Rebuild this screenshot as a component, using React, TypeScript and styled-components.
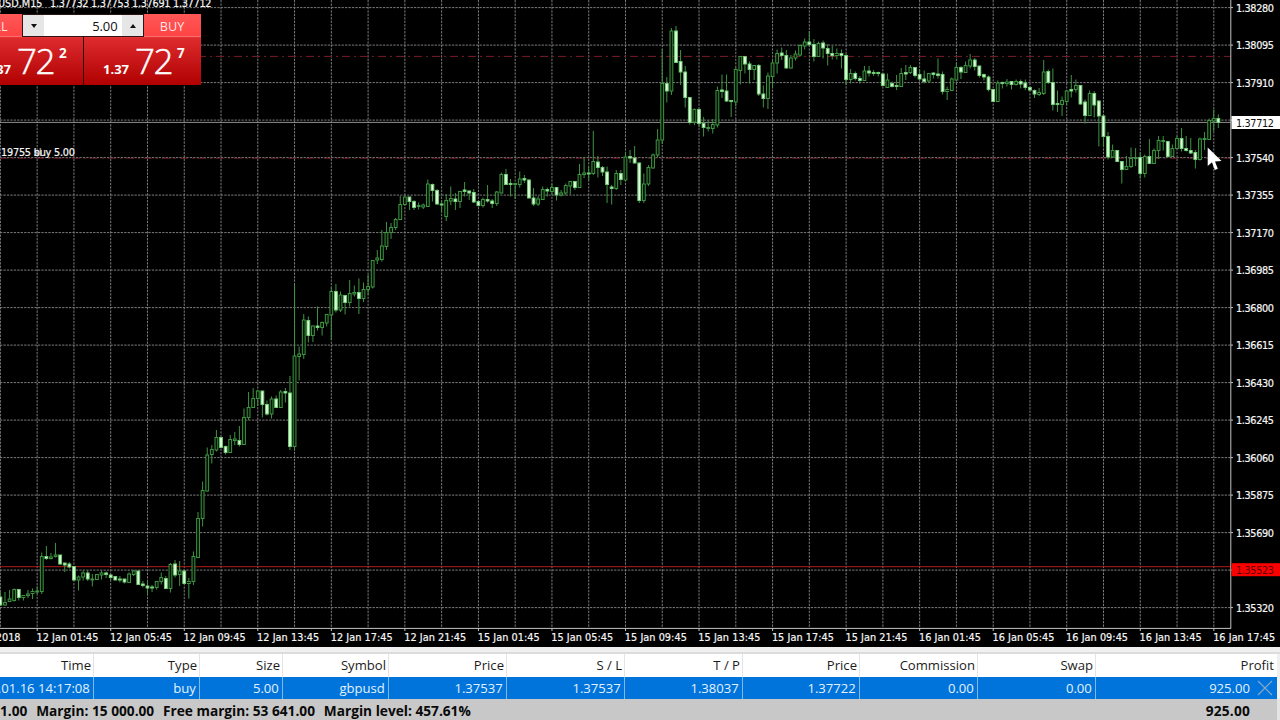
import React from "react";
import styled, { createGlobalStyle } from "styled-components";

// [high, bodyTop, bodyBottom, low, filled]
type Candle = [number, number, number, number, number];

interface Column {
  title: string;
  value: string;
  width: number;
}

const CANDLE_START = 0.4;
const CANDLE_STEP = 4.596;
const GRID_X = 36.77;
const GRID_Y = 37.5;
const CHART_WIDTH = 1231;
const CHART_HEIGHT = 628;

const candles: Candle[] = [
  [592, 597, 605, 606, 1], [592, 602.5, 605, 605.5, 0], [590, 599, 601.5, 602, 0], [588.5, 589.5, 600.5, 601.5, 0],
  [589, 589.5, 597.5, 600.5, 1], [595, 595.5, 597.5, 600.5, 0], [590, 594, 595.5, 598, 0], [588.5, 591.5, 593.5, 599, 0],
  [586.5, 591, 592, 594, 0], [552.5, 556.5, 591.5, 594, 0], [546, 556.5, 558.5, 560, 1], [553, 557, 558.5, 559.5, 0],
  [543, 555, 556.5, 557.5, 0], [555, 555, 564, 565, 1], [563, 563, 565, 572, 1], [562, 564, 567, 568.5, 1],
  [566.5, 566.5, 580, 580.5, 1], [575.5, 577, 580, 590.5, 0], [570.5, 573, 577, 580.5, 0], [570.5, 573, 579, 581, 1],
  [574, 579, 580, 586.5, 0], [574, 574.5, 579.5, 580, 0], [570.5, 573, 575, 579.5, 0], [571.5, 573, 574.5, 578, 1],
  [575, 575, 577.5, 580, 1], [576, 576.5, 580, 580, 1], [576, 579, 580, 582.5, 1], [579, 579, 582, 583.5, 1],
  [572.5, 574, 582.5, 583, 0], [570, 571, 574.5, 576, 0], [571, 571, 584.5, 585, 1], [581, 584, 585.5, 587.5, 1],
  [580.5, 586, 588, 594.5, 1], [585, 587, 588, 592, 1], [581, 581.5, 587.5, 589.5, 0], [572.5, 577.5, 581.5, 584.5, 0],
  [576, 578.5, 588.5, 589, 1], [563, 564.5, 588.5, 592.5, 0], [560, 564, 575, 577.5, 1], [561, 571, 574.5, 586, 0],
  [571, 571, 583.5, 584.5, 1], [578, 581.5, 583.5, 598.5, 0], [551.5, 556.5, 581.5, 585, 0], [512, 518.5, 557.5, 558, 0],
  [481.5, 490.5, 518.5, 526.5, 0], [447.5, 455, 491, 491.5, 0], [445, 449.5, 454.5, 463.5, 0], [430, 437.5, 450, 451.5, 0],
  [437, 437.5, 447.5, 448, 1], [445.5, 446.5, 452.5, 454.5, 1], [435, 439.5, 452.5, 453, 0], [432, 439, 440.5, 445, 0],
  [426, 440.5, 444.5, 446.5, 1], [408.5, 417.5, 444.5, 445, 0], [392, 407.5, 417.5, 420, 0], [388, 398.5, 407.5, 408, 0],
  [390, 391, 398.5, 406, 0], [391, 391, 404.5, 417.5, 1], [400.5, 404.5, 414, 415.5, 1], [396.5, 399, 414, 418.5, 0],
  [395.5, 399, 407.5, 408, 1], [390, 392, 407.5, 408, 0], [388, 391.5, 393, 402.5, 1], [376, 393, 446.5, 450, 1],
  [284, 356, 446.5, 450.5, 0], [346.5, 354, 356.5, 380.5, 0], [314, 320, 354.5, 359, 0], [316.5, 320.5, 335.5, 342.5, 1],
  [325.5, 326, 335.5, 342, 0], [306.5, 326, 327.5, 330.5, 1], [321.5, 322.5, 327.5, 335.5, 0], [314, 314.5, 323, 326.5, 0],
  [287.5, 291.5, 315, 340, 0], [284, 291.5, 310, 312.5, 1], [291.5, 295, 310, 312, 0], [295, 295.5, 302.5, 314.5, 1],
  [280, 293.5, 302.5, 306.5, 0], [285.5, 292.5, 294, 296.5, 0], [278.5, 292.5, 298.5, 314, 1], [282.5, 289.5, 298.5, 302, 0],
  [275, 286.5, 289.5, 295, 0], [260, 260.5, 287, 288.5, 0], [250, 258, 260, 264, 0], [230, 246, 259.5, 261.5, 0],
  [222, 232.5, 246.5, 250, 0], [223, 227.5, 232.5, 239, 0], [218, 219.5, 227.5, 230, 0], [196, 204.5, 219.5, 220, 0],
  [195.5, 197, 204.5, 205.5, 0], [197, 197, 201.5, 210, 1], [200, 201.5, 207.5, 210, 1], [202.5, 205.5, 206.5, 209.5, 0],
  [203.5, 205, 207, 209, 0], [179.5, 184, 206.5, 206.5, 0], [183.5, 184.5, 190.5, 201.5, 1], [189, 190.5, 204, 205, 1],
  [200.5, 204, 205, 212.5, 1], [194, 200.5, 216.5, 221, 0], [186.5, 198.5, 201, 205, 0], [193, 199, 201.5, 210, 1],
  [191, 191.5, 201.5, 208, 0], [182, 190, 191.5, 196.5, 1], [190.5, 191, 193, 200, 1], [189, 192.5, 202, 203, 1],
  [200.5, 201.5, 205.5, 206.5, 1], [197.5, 199.5, 205.5, 207.5, 0], [185, 199.5, 201, 202.5, 1], [199, 201, 203.5, 208, 1],
  [191, 192, 203.5, 206, 0], [172.5, 174.5, 193, 193.5, 0], [169, 174.5, 184.5, 185, 1], [179, 183.5, 184.5, 196.5, 1],
  [183, 183.5, 184.5, 199, 0], [171.5, 179, 184.5, 187.5, 0], [175, 178.5, 180, 183, 1], [179.5, 180, 198, 198.5, 1],
  [188, 198, 204, 206, 1], [196, 199, 204, 206, 0], [186.5, 189.5, 199.5, 200, 0], [187.5, 189.5, 191, 196.5, 1],
  [184, 187.5, 191.5, 194, 0], [187, 187.5, 195, 200.5, 1], [190, 193, 195, 196.5, 0], [183.5, 185.5, 193, 195.5, 0],
  [181, 181.5, 186, 194.5, 0], [181, 181.5, 187.5, 190, 1], [164, 174.5, 187.5, 188, 0], [157, 173, 174.5, 178, 0],
  [167, 173, 174, 180, 1], [131, 161.5, 173.5, 175, 0], [156, 162, 167.5, 177.5, 1], [166, 167.5, 172, 176, 1],
  [166.5, 172, 184.5, 203, 1], [185, 187, 188.5, 204.5, 1], [170, 173.5, 188.5, 190, 0], [170, 173.5, 179.5, 185, 1],
  [152, 157, 180, 181, 0], [150, 156.5, 158, 163, 1], [146, 158, 163, 163.5, 1], [162.5, 163, 200.5, 203, 1],
  [173.5, 184, 200.5, 203, 0], [165, 167.5, 184, 186, 0], [153.5, 155, 168, 168.5, 0], [129, 140, 155, 157, 0],
  [49, 83.5, 140, 144, 0], [77, 83.5, 91, 102.5, 1], [28, 31, 91, 95, 0], [26, 31, 62.5, 63, 1],
  [50, 61.5, 72, 85, 1], [66, 72, 97.5, 107.5, 1], [97, 97.5, 122.5, 124.5, 1], [108.5, 109.5, 122, 125, 0],
  [108.5, 109.5, 123.5, 127, 1], [117, 123.5, 127.5, 136.5, 1], [120, 127.5, 128.5, 131.5, 0], [119, 124.5, 128.5, 133.5, 0],
  [86.5, 90.5, 125, 127.5, 0], [74.5, 90, 91.5, 98, 1], [74.5, 91, 101, 102, 1], [100, 100.5, 101.5, 117, 1],
  [67.5, 69.5, 102, 106.5, 0], [56, 56.5, 70.5, 84.5, 0], [56, 56.5, 64, 73.5, 1], [61.5, 64, 69.5, 83.5, 1],
  [65, 65.5, 69.5, 80, 0], [64, 65.5, 94, 96, 1], [85.5, 94, 98.5, 107.5, 1], [72.5, 76, 98.5, 109, 0],
  [60, 63, 76.5, 87.5, 0], [49.5, 53.5, 63, 73.5, 0], [47.5, 53, 55.5, 60, 1], [50, 55.5, 68, 68.5, 1],
  [55, 58, 68, 68.5, 0], [50.5, 54, 58, 60.5, 0], [44.5, 45.5, 55, 56.5, 0], [38.5, 42, 46, 49.5, 0],
  [31, 42, 44.5, 46.5, 1], [39, 44.5, 56.5, 61.5, 1], [41.5, 43.5, 56.5, 57, 0], [40.5, 43, 48, 58.5, 1],
  [44, 48.5, 53.5, 65.5, 1], [46, 53.5, 55.5, 59.5, 1], [48.5, 53.5, 55.5, 59.5, 0], [49.5, 53.5, 55.5, 68.5, 1],
  [54, 55.5, 79.5, 85, 1], [69, 73.5, 79.5, 83.5, 0], [71.5, 73.5, 78.5, 80.5, 1], [76, 78.5, 80.5, 83.5, 1],
  [66, 71, 80.5, 81, 0], [66, 71, 73, 76.5, 1], [70, 72.5, 73.5, 76, 1], [71.5, 72.5, 73.5, 76.5, 1],
  [73.5, 74, 85.5, 86, 1], [73.5, 80, 87.5, 88, 0], [81.5, 83.5, 86.5, 87.5, 1], [75, 85.5, 86.5, 90, 1],
  [68, 73.5, 86.5, 87, 0], [65, 72.5, 74, 80, 1], [65, 67.5, 72.5, 74, 0], [67, 67.5, 75.5, 77.5, 1],
  [70, 74.5, 79, 80, 1], [70.5, 79, 81.5, 83.5, 1], [73, 73.5, 81, 82.5, 0], [72.5, 73, 74.5, 78.5, 1],
  [58.5, 74, 75.5, 78.5, 1], [71.5, 74.5, 91.5, 94.5, 1], [86.5, 89.5, 91.5, 100, 0], [77.5, 79, 90.5, 91, 0],
  [63.5, 67.5, 80, 81, 0], [66, 67.5, 72, 79, 1], [61.5, 65.5, 72.5, 73, 0], [54, 60, 66, 68.5, 0],
  [58, 60, 66.5, 70.5, 1], [66, 66, 75.5, 77.5, 1], [73.5, 74.5, 77, 80.5, 1], [75.5, 77, 89.5, 91.5, 1],
  [89, 89.5, 101.5, 102, 1], [80.5, 83, 101.5, 102, 0], [81.5, 82.5, 83.5, 88.5, 1], [79, 82, 83.5, 86.5, 0],
  [81, 81.5, 84.5, 89.5, 1], [79.5, 81.5, 84.5, 85.5, 0], [79.5, 81.5, 84, 88.5, 1], [79.5, 83, 87.5, 90, 1],
  [86, 87.5, 90, 91, 1], [89.5, 90.5, 94, 98, 1], [88, 92.5, 94.5, 96, 0], [60, 72, 93.5, 95, 0],
  [69.5, 71.5, 82.5, 84, 1], [68.5, 82.5, 104.5, 110.5, 1], [90.5, 103.5, 104.5, 112, 1], [96.5, 100.5, 104.5, 116, 0],
  [90, 91, 101.5, 105, 0], [75, 89.5, 91, 97.5, 1], [79.5, 85.5, 89.5, 92.5, 0], [85, 85.5, 104, 104.5, 1],
  [99.5, 102, 115.5, 123.5, 1], [90.5, 93.5, 115.5, 116, 0], [91, 93.5, 105, 117.5, 1], [100.5, 101, 116, 146.5, 1],
  [115.5, 116, 136.5, 147, 1], [132, 136.5, 157, 159.5, 1], [144.5, 150.5, 157, 158, 0], [150, 150.5, 161.5, 162, 1],
  [161, 161.5, 169.5, 183.5, 1], [156, 166.5, 169.5, 170, 0], [147.5, 158.5, 166.5, 168, 0], [148, 157.5, 158.5, 166, 0],
  [152.5, 157.5, 173.5, 178.5, 1], [154.5, 156.5, 173.5, 177.5, 0], [139, 156.5, 163.5, 164, 1], [148.5, 150.5, 163.5, 164, 0],
  [136, 140.5, 150.5, 159, 0], [136, 140.5, 141.5, 150.5, 0], [141, 141.5, 156.5, 157.5, 1], [144.5, 148.5, 156.5, 157, 0],
  [136, 138.5, 148.5, 149, 0], [128, 138.5, 148.5, 151.5, 1], [136, 148.5, 150.5, 151.5, 1], [138, 150.5, 153, 154, 1],
  [150, 152.5, 159.5, 168.5, 1], [137.5, 139, 159.5, 160.5, 0], [132, 138.5, 139.5, 150, 0], [118.5, 120.5, 139.5, 140, 0],
  [109.5, 118.5, 121, 131, 0], [114.5, 118.5, 122.5, 128, 1],
];

const priceLabels = [
  "1.38280", "1.38095", "1.37910", "", "1.37540", "1.37355", "1.37170", "1.36985", "1.36800",
  "1.36615", "1.36430", "1.36245", "1.36060", "1.35875", "1.35690", "", "1.35320",
];

const timeLabels = [
  "12 Jan 01:45", "12 Jan 05:45", "12 Jan 09:45", "12 Jan 13:45", "12 Jan 17:45", "12 Jan 21:45",
  "15 Jan 01:45", "15 Jan 05:45", "15 Jan 09:45", "15 Jan 13:45", "15 Jan 17:45", "15 Jan 21:45",
  "16 Jan 01:45", "16 Jan 05:45", "16 Jan 09:45", "16 Jan 13:45", "16 Jan 17:45",
];

const columns: Column[] = [
  { title: "Time", value: "2018.01.16 14:17:08", width: 94 },
  { title: "Type", value: "buy", width: 106 },
  { title: "Size", value: "5.00", width: 83 },
  { title: "Symbol", value: "gbpusd", width: 106 },
  { title: "Price", value: "1.37537", width: 118 },
  { title: "S / L", value: "1.37537", width: 118 },
  { title: "T / P", value: "1.38037", width: 118 },
  { title: "Price", value: "1.37722", width: 117 },
  { title: "Commission", value: "0.00", width: 118 },
  { title: "Swap", value: "0.00", width: 118 },
];

const GlobalStyle = createGlobalStyle`
  * {
    box-sizing: border-box;
  }
  body {
    margin: 0;
    overflow: hidden;
    background: #000;
  }
`;

const Terminal = styled.div`
  display: flex;
  flex-direction: column;
  width: 1280px;
  height: 720px;
  overflow: hidden;
  font-family: "Open Sans", "Noto Sans", sans-serif;
`;

const ChartPane = styled.div`
  position: relative;
  height: 647px;
  background: #000;
`;

const ChartSvg = styled.svg`
  display: block;
  font-family: "DejaVu Sans Condensed", "DejaVu Sans", sans-serif;
  font-stretch: condensed;
  font-size: 10.8px;
`;

const TradePanel = styled.div`
  position: absolute;
  top: 14px;
  left: -34px;
  width: 235px;
  height: 71px;
  display: grid;
  grid-template-columns: 117px 117px;
  column-gap: 1px;
  background: #2a0000;
`;

const Tile = styled.div`
  display: flex;
  flex-direction: column;
  background: linear-gradient(#ff5757 0, #f44 22px, #de2c2e 24px, #b00000 100%);
  color: #fff;
`;

const TileLabel = styled.div<{ $side: "left" | "right" }>`
  align-self: ${({ $side }) => ($side === "left" ? "flex-start" : "flex-end")};
  width: 57px;
  height: 23px;
  padding-right: 1px;
  border-bottom: 1px solid #f47070;
  color: #ffe4e4;
  font-size: 12.6px;
  line-height: 25px;
  text-align: center;
`;

const Quote = styled.div`
  display: flex;
  align-items: baseline;
  height: 48px;
  padding-left: 19px;
  line-height: 48px;
`;

const QuoteBase = styled.span`
  width: 32px;
  font-size: 13px;
  font-weight: 700;
`;

const QuoteBig = styled.span`
  width: 42px;
  font-size: 35px;
  font-weight: 300;
  letter-spacing: -1.5px;
  -webkit-text-stroke: 0.5px #fff;
`;

const QuotePip = styled.span`
  position: relative;
  top: -16px;
  font-size: 13.5px;
  font-weight: 700;
`;

const VolumeBox = styled.div`
  position: absolute;
  top: 0;
  left: 56px;
  width: 122px;
  height: 23px;
  display: flex;
  border: 1px solid #2c1414;
  background: #fff;
`;

const SpinButton = styled.div`
  width: 21px;
  display: flex;
  align-items: center;
  justify-content: center;
  background: #e6e6e6;
`;

const Volume = styled.div`
  flex: 1;
  padding-right: 4.5px;
  color: #111;
  font-size: 13px;
  line-height: 22px;
  text-align: right;
  letter-spacing: -0.1px;
`;

const Splitter = styled.div`
  height: 7px;
  background: #f0f0f0;
  border-bottom: 2px solid #dcdcdc;
`;

const TableRow = styled.div<{ $selected?: boolean }>`
  display: flex;
  height: ${({ $selected }) => ($selected ? 22 : 23)}px;
  background: ${({ $selected }) => ($selected ? "#0074da" : "#fff")};
  color: ${({ $selected }) => ($selected ? "#e3f1ff" : "#1c1c1c")};
  font-size: 13.1px;
  line-height: ${({ $selected }) => ($selected ? 22 : 23)}px;
  border-right: 3px solid #f0f0f0;
`;

const Cell = styled.div<{ $width: number; $selected?: boolean }>`
  display: flex;
  justify-content: flex-end;
  flex: 0 0 ${({ $width }) => $width}px;
  padding-right: ${({ $selected }) => ($selected ? 3.2 : 2)}px;
  border-right: 1px solid ${({ $selected }) => ($selected ? "#7fb9ec" : "#e4e4e4")};
  overflow: hidden;
  white-space: nowrap;
`;

const ProfitCell = styled.div<{ $selected?: boolean }>`
  flex: 1;
  display: flex;
  align-items: center;
  justify-content: flex-end;
  gap: 7px;
  padding-right: ${({ $selected }) => ($selected ? 4 : 3)}px;
`;

const StatusBar = styled.div`
  display: flex;
  gap: 8.8px;
  height: 21px;
  padding-right: 27px;
  border-right: 3px solid #e4e4e4;
  background: #c8c8c8;
  color: #0a0a0a;
  font-size: 13.7px;
  font-weight: 700;
  line-height: 24px;
  white-space: nowrap;
`;

const Total = styled.span`
  margin-left: auto;
  letter-spacing: 0.2px;
`;

const CandleShape = ({ candle, index }: { candle: Candle; index: number }) => {
  const [high, top, bottom, low, filled] = candle;
  const x = CANDLE_START + index * CANDLE_STEP;
  return (
    <g stroke="#3f9443" strokeWidth={1}>
      <line x1={x} x2={x} y1={high} y2={low} />
      <rect
        x={x - 1.4}
        y={top}
        width={2.8}
        height={Math.max(bottom - top, 0.8)}
        fill={filled ? "#dcffdc" : "#001400"}
        stroke={filled ? "#72cc75" : "#3f9443"}
      />
    </g>
  );
};

const Chart = () => (
  <ChartSvg width={1280} height={647}>
    <g stroke="#7c7c7c" strokeWidth={1} strokeDasharray="2.3 1.15">
      {priceLabels.map((_, i) => (
        <line key={i} x1={0} x2={CHART_WIDTH} y1={7.6 + i * GRID_Y} y2={7.6 + i * GRID_Y} />
      ))}
      {Array.from({ length: 34 }, (_, i) => (
        <line key={i} x1={0.4 + i * GRID_X} x2={0.4 + i * GRID_X} y1={0} y2={CHART_HEIGHT} />
      ))}
    </g>

    <g stroke="#7a1c26" strokeDasharray="8 4 2 4">
      <line x1={0} x2={CHART_WIDTH} y1={56.4} y2={56.4} />
      <line x1={0} x2={CHART_WIDTH} y1={158.3} y2={158.3} strokeOpacity={0.8} />
    </g>
    <line x1={0} x2={CHART_WIDTH} y1={566.7} y2={566.7} stroke="#b01c1c" />
    <line x1={0} x2={CHART_WIDTH} y1={122.4} y2={122.4} stroke="#909090" />

    {candles.map((candle, i) => (
      <CandleShape key={i} candle={candle} index={i} />
    ))}

    <g stroke="#c4c4c4">
      <line x1={1230.8} x2={1230.8} y1={0} y2={628.5} />
      <line x1={0} x2={1231} y1={628.4} y2={628.4} />
      {timeLabels.map((label, i) => (
        <line key={label} x1={37.2 + i * GRID_X * 2} x2={37.2 + i * GRID_X * 2} y1={628} y2={631} />
      ))}
      {priceLabels.map((_, i) => (
        <line key={i} x1={1231} x2={1233} y1={7.6 + i * GRID_Y} y2={7.6 + i * GRID_Y} />
      ))}
    </g>

    <g fill="#f6f6f6" stroke="#f6f6f6" strokeWidth={0.2}>
      {priceLabels.map((label, i) => (
        <text key={i} x={1236} y={11.8 + i * GRID_Y} textLength={label ? 38 : undefined}>
          {label}
        </text>
      ))}
      {timeLabels.map((label, i) => (
        <text key={label} x={36.5 + i * GRID_X * 2} y={641} textLength={62}>
          {label}
        </text>
      ))}
      <text x={20.5} y={641} textAnchor="end">2018</text>
      <text x={42.5} y={7} textAnchor="end">GBPUSD,M15</text>
      <text x={50} y={7} textLength={161.5}>1.37732 1.37753 1.37691 1.37712</text>
      <text x={1} y={156} textLength={74}>19755 buy 5.00</text>
      <text x={34} y={156} opacity={0.7}>sl</text>
    </g>

    <rect x={1231.5} y={116} width={48.5} height={13} fill="#fff" />
    <text x={1236} y={127} fill="#111" textLength={38}>1.37712</text>
    <rect x={1231.5} y={563.2} width={48.5} height={13} fill="#f00" />
    <text x={1236} y={574} fill="#5c0000" textLength={38}>1.35523</text>

    <path d="M1207.7 147.5V166L1212 162.3L1214.8 170L1217.8 168.8L1215 161.6L1221.5 161Z" fill="#fff" />
  </ChartSvg>
);

const OneClickTrading = () => (
  <TradePanel>
    <Tile>
      <TileLabel $side="left">SELL</TileLabel>
      <Quote>
        <QuoteBase>1.37</QuoteBase>
        <QuoteBig>72</QuoteBig>
        <QuotePip>2</QuotePip>
      </Quote>
    </Tile>
    <Tile>
      <TileLabel $side="right">BUY</TileLabel>
      <Quote>
        <QuoteBase>1.37</QuoteBase>
        <QuoteBig>72</QuoteBig>
        <QuotePip>7</QuotePip>
      </Quote>
    </Tile>
    <VolumeBox>
      <SpinButton>
        <svg width={6} height={4}>
          <path d="M0 0H6L3 4Z" fill="#111" />
        </svg>
      </SpinButton>
      <Volume>5.00</Volume>
      <SpinButton>
        <svg width={6} height={4}>
          <path d="M0 4H6L3 0Z" fill="#111" />
        </svg>
      </SpinButton>
    </VolumeBox>
  </TradePanel>
);

const App = () => (
  <Terminal>
    <GlobalStyle />
    <ChartPane>
      <Chart />
      <OneClickTrading />
    </ChartPane>
    <Splitter />
    <TableRow>
      {columns.map(({ title, width }, i) => (
        <Cell key={i} $width={width}>{title}</Cell>
      ))}
      <ProfitCell>Profit</ProfitCell>
    </TableRow>
    <TableRow $selected>
      {columns.map(({ value, width }, i) => (
        <Cell key={i} $width={width} $selected>{value}</Cell>
      ))}
      <ProfitCell $selected>
        925.00
        <svg width={16} height={16} stroke="#86a9c9" strokeWidth={1.2}>
          <path d="M1 1L15 15M15 1L1 15" />
        </svg>
      </ProfitCell>
    </TableRow>
    <StatusBar>
      <span>1.00</span>
      <span>Margin: 15 000.00</span>
      <span>Free margin: 53 641.00</span>
      <span>Margin level: 457.61%</span>
      <Total>925.00</Total>
    </StatusBar>
  </Terminal>
);

export default App;
